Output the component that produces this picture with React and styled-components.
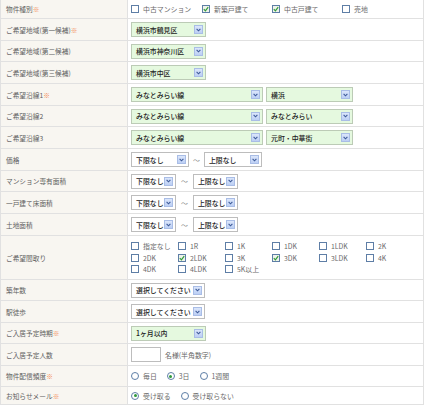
import React from "react";
import styled, { createGlobalStyle } from "styled-components";

const Global = createGlobalStyle`
  html, body { margin: 0; padding: 0; background: #fff; }
  body { font-family: "Noto Sans CJK JP", "Noto Sans", sans-serif; }
`;

const ROW_HEIGHTS = [19, 22, 21, 22, 22, 21, 22, 22, 21, 22, 22, 44, 21, 22, 21, 22, 21, 18];

const Table = styled.div`
  width: 424px;
  box-sizing: border-box;
  border-left: 1px solid #e1e1e1;
  border-right: 1px solid #e1e1e1;
  display: grid;
  grid-template-columns: 127px 1fr;
  grid-template-rows: ${ROW_HEIGHTS.map((h) => h + "px").join(" ")};
`;

const LabelCell = styled.div`
  box-sizing: border-box;
  background: #f8f6f1;
  border-right: 1px solid #e1e1e1;
  border-bottom: 1px solid #e1e1e1;
  display: flex;
  align-items: center;
  padding-left: 5px;
  font-size: 6.7px;
  color: #5e5e5e;
  white-space: nowrap;
`;

const Req = styled.span`
  color: #f2874f;
`;

const ValueCell = styled.div`
  box-sizing: border-box;
  border-bottom: 1px solid #e1e1e1;
  display: flex;
  align-items: center;
  padding-left: 3px;
  gap: ${(p) => p.$gap || 0}px;
  font-size: 6.9px;
  color: #666;
  white-space: nowrap;
`;

const SelectBox = styled.div`
  box-sizing: border-box;
  width: ${(p) => p.$w}px;
  height: 15px;
  display: flex;
  align-items: center;
  justify-content: space-between;
  padding: 0 1px 0 3px;
  border: 1px solid ${(p) => (p.$green ? "#bccbb6" : "#bdbdbd")};
  background: ${(p) => (p.$green ? "#e5f9df" : "#fff")};
  font-size: 6.9px;
  font-weight: 500;
  color: #222;
  overflow: hidden;
`;

const SelectText = styled.span`
  padding-left: 1px;
  white-space: nowrap;
`;

const ArrowBox = styled.span`
  box-sizing: border-box;
  flex: none;
  width: 9px;
  height: 9px;
  margin-right: 1px;
  display: flex;
  align-items: center;
  justify-content: center;
  border: 1px solid #a9bde6;
  background: linear-gradient(#dbe6fb, #bccff4);
`;

const Tilde = styled.span`
  color: #888;
  font-size: 6.9px;
`;

const Options = styled.div`
  display: grid;
  grid-template-columns: ${(p) => p.$cols};
  grid-auto-rows: ${(p) => p.$rowH || 12}px;
  align-items: center;
`;

const Inline = styled.div`
  display: flex;
  align-items: center;
  gap: ${(p) => p.$gap}px;
`;

const Opt = styled.label`
  display: flex;
  align-items: center;
  gap: 4px;
  font-size: 6.9px;
  color: #6a6a6a;
`;

const Box = styled.span`
  box-sizing: border-box;
  width: 8px;
  height: 8px;
  border: 1px solid #5e7ea6;
  background: ${(p) => (p.$on ? "#eef3ea" : "#fff")};
  display: flex;
  align-items: center;
  justify-content: center;
`;

const Radio = styled.span`
  box-sizing: border-box;
  width: 8px;
  height: 8px;
  border-radius: 50%;
  border: 1px solid #5e7ea6;
  background: #fff;
  display: flex;
  align-items: center;
  justify-content: center;
  &::after {
    content: "";
    width: 3px;
    height: 3px;
    border-radius: 50%;
    background: ${(p) => (p.$on ? "#2f9a3a" : "transparent")};
  }
`;

const TextInput = styled.span`
  box-sizing: border-box;
  width: 30px;
  height: 15px;
  border: 1px solid #bdbdbd;
  background: #fff;
`;

const Note = styled.span`
  margin-left: 4px;
  color: #666;
`;

function Arrow() {
  return (
    <ArrowBox>
      <svg width="5" height="4" viewBox="0 0 5 4">
        <path d="M0.6 0.8 L2.5 2.8 L4.4 0.8" fill="none" stroke="#3d5a98" strokeWidth="1.1" />
      </svg>
    </ArrowBox>
  );
}

function Select({ w, green, children }) {
  return (
    <SelectBox $w={w} $green={green}>
      <SelectText>{children}</SelectText>
      <Arrow />
    </SelectBox>
  );
}

function Check({ on, children }) {
  return (
    <Opt>
      <Box $on={on}>
        {on && (
          <svg width="6" height="6" viewBox="0 0 6 6">
            <path d="M0.8 3.2 L2.4 4.8 L5.2 1.2" fill="none" stroke="#2f9a3a" strokeWidth="1.2" />
          </svg>
        )}
      </Box>
      {children}
    </Opt>
  );
}

function RadioOpt({ on, children }) {
  return (
    <Opt>
      <Radio $on={on} />
      {children}
    </Opt>
  );
}

function Range({ w1, w2, gap }) {
  return (
    <ValueCell $gap={gap}>
      <Select w={w1}>下限なし</Select>
      <Tilde>～</Tilde>
      <Select w={w2}>上限なし</Select>
    </ValueCell>
  );
}

const madori = [
  ["指定なし", false], ["1R", false], ["1K", false], ["1DK", false], ["1LDK", false], ["2K", false],
  ["2DK", false], ["2LDK", true], ["3K", false], ["3DK", true], ["3LDK", false], ["4K", false],
  ["4DK", false], ["4LDK", false], ["5K以上", false],
];

function Label({ req, children }) {
  return (
    <LabelCell>
      {children}
      {req && <Req>※</Req>}
    </LabelCell>
  );
}

export default function App() {
  return (
    <>
      <Global />
      <Table>
        <Label req>物件種別</Label>
        <ValueCell>
          <Options $cols="71px 70px 70px auto">
            <Check>中古マンション</Check>
            <Check on>新築戸建て</Check>
            <Check on>中古戸建て</Check>
            <Check>売地</Check>
          </Options>
        </ValueCell>

        <Label req>ご希望地域(第一候補)</Label>
        <ValueCell>
          <Select w={75} green>横浜市鶴見区</Select>
        </ValueCell>

        <Label>ご希望地域(第二候補)</Label>
        <ValueCell>
          <Select w={75} green>横浜市神奈川区</Select>
        </ValueCell>

        <Label>ご希望地域(第三候補)</Label>
        <ValueCell>
          <Select w={75} green>横浜市中区</Select>
        </ValueCell>

        <Label req>ご希望沿線1</Label>
        <ValueCell $gap={3}>
          <Select w={132} green>みなとみらい線</Select>
          <Select w={87} green>横浜</Select>
        </ValueCell>

        <Label>ご希望沿線2</Label>
        <ValueCell $gap={3}>
          <Select w={132} green>みなとみらい線</Select>
          <Select w={87} green>みなとみらい</Select>
        </ValueCell>

        <Label>ご希望沿線3</Label>
        <ValueCell $gap={3}>
          <Select w={132} green>みなとみらい線</Select>
          <Select w={87} green>元町・中華街</Select>
        </ValueCell>

        <Label>価格</Label>
        <Range w1={58} w2={58} gap={4} />

        <Label>マンション専有面積</Label>
        <Range w1={45} w2={45} gap={5} />

        <Label>一戸建て床面積</Label>
        <Range w1={45} w2={45} gap={5} />

        <Label>土地面積</Label>
        <Range w1={45} w2={45} gap={5} />

        <Label>ご希望間取り</Label>
        <ValueCell>
          <Options $cols="repeat(6, 47px)" $rowH={11.7}>
            {madori.map(([t, on]) => (
              <Check key={t} on={on}>{t}</Check>
            ))}
          </Options>
        </ValueCell>

        <Label>築年数</Label>
        <ValueCell>
          <Select w={74}>選択してください</Select>
        </ValueCell>

        <Label>駅徒歩</Label>
        <ValueCell>
          <Select w={74}>選択してください</Select>
        </ValueCell>

        <Label req>ご入居予定時期</Label>
        <ValueCell>
          <Select w={75} green>1ヶ月以内</Select>
        </ValueCell>

        <Label>ご入居予定人数</Label>
        <ValueCell>
          <TextInput />
          <Note>名様(半角数字)</Note>
        </ValueCell>

        <Label req>物件配信頻度</Label>
        <ValueCell>
          <Inline $gap={10}>
            <RadioOpt>毎日</RadioOpt>
            <RadioOpt on>3日</RadioOpt>
            <RadioOpt>1週間</RadioOpt>
          </Inline>
        </ValueCell>

        <Label req>お知らせメール</Label>
        <ValueCell>
          <Inline $gap={10}>
            <RadioOpt on>受け取る</RadioOpt>
            <RadioOpt>受け取らない</RadioOpt>
          </Inline>
        </ValueCell>
      </Table>
    </>
  );
}
